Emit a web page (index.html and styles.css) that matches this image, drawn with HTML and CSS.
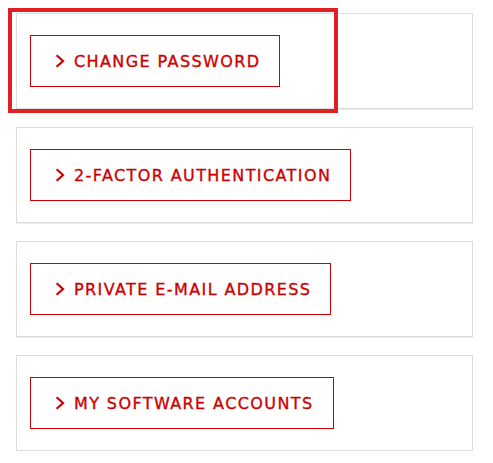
FILE: index.html
```html
<!DOCTYPE html>
<html>
<head>
<meta charset="utf-8">
<link rel="stylesheet" href="styles.css">
</head>
<body>
<div class="page">
  <div class="panel">
    <a class="btn" href="#"><svg class="chev" width="10" height="14" viewBox="0 0 10 14"><path d="M1.6 1.3 L8 7 L1.6 12.7" fill="none" stroke="#cc0000" stroke-width="2.2"/></svg><span>CHANGE PASSWORD</span></a>
  </div>
  <div class="panel">
    <a class="btn" href="#"><svg class="chev" width="10" height="14" viewBox="0 0 10 14"><path d="M1.6 1.3 L8 7 L1.6 12.7" fill="none" stroke="#cc0000" stroke-width="2.2"/></svg><span>2-FACTOR AUTHENTICATION</span></a>
  </div>
  <div class="panel">
    <a class="btn" href="#"><svg class="chev" width="10" height="14" viewBox="0 0 10 14"><path d="M1.6 1.3 L8 7 L1.6 12.7" fill="none" stroke="#cc0000" stroke-width="2.2"/></svg><span>PRIVATE E-MAIL ADDRESS</span></a>
  </div>
  <div class="panel">
    <a class="btn" href="#"><svg class="chev" width="10" height="14" viewBox="0 0 10 14"><path d="M1.6 1.3 L8 7 L1.6 12.7" fill="none" stroke="#cc0000" stroke-width="2.2"/></svg><span>MY SOFTWARE ACCOUNTS</span></a>
  </div>
  <div class="highlight"></div>
</div>
</body>
</html>
```
FILE: styles.css
```css
html, body {
  margin: 0;
  padding: 0;
  background: #ffffff;
}
.page {
  position: relative;
  display: flex;
  flex-direction: column;
  gap: 18px;
  padding: 13px 20px 0 16px;
  width: 457px;
}
.panel {
  border: 1px solid #dcdcdc;
  box-shadow: 0 1px 0 #ececec;
  padding: 21px 13px;
  display: flex;
  align-items: flex-start;
}
.btn {
  display: inline-flex;
  align-items: center;
  height: 50px;
  border: 1px solid #cc0000;
  padding: 0 19px 0 24px;
  color: #cc0000;
  text-decoration: none;
  font-family: "DejaVu Sans", sans-serif;
  font-size: 16px;
  letter-spacing: 1.4px;
  -webkit-text-stroke: 0.35px #cc0000;
  white-space: nowrap;
}
.chev {
  display: block;
  margin-right: 9px;
}
.highlight {
  position: absolute;
  left: 8px;
  top: 8px;
  width: 322px;
  height: 97px;
  border: 4px solid #e21f22;
}
```
